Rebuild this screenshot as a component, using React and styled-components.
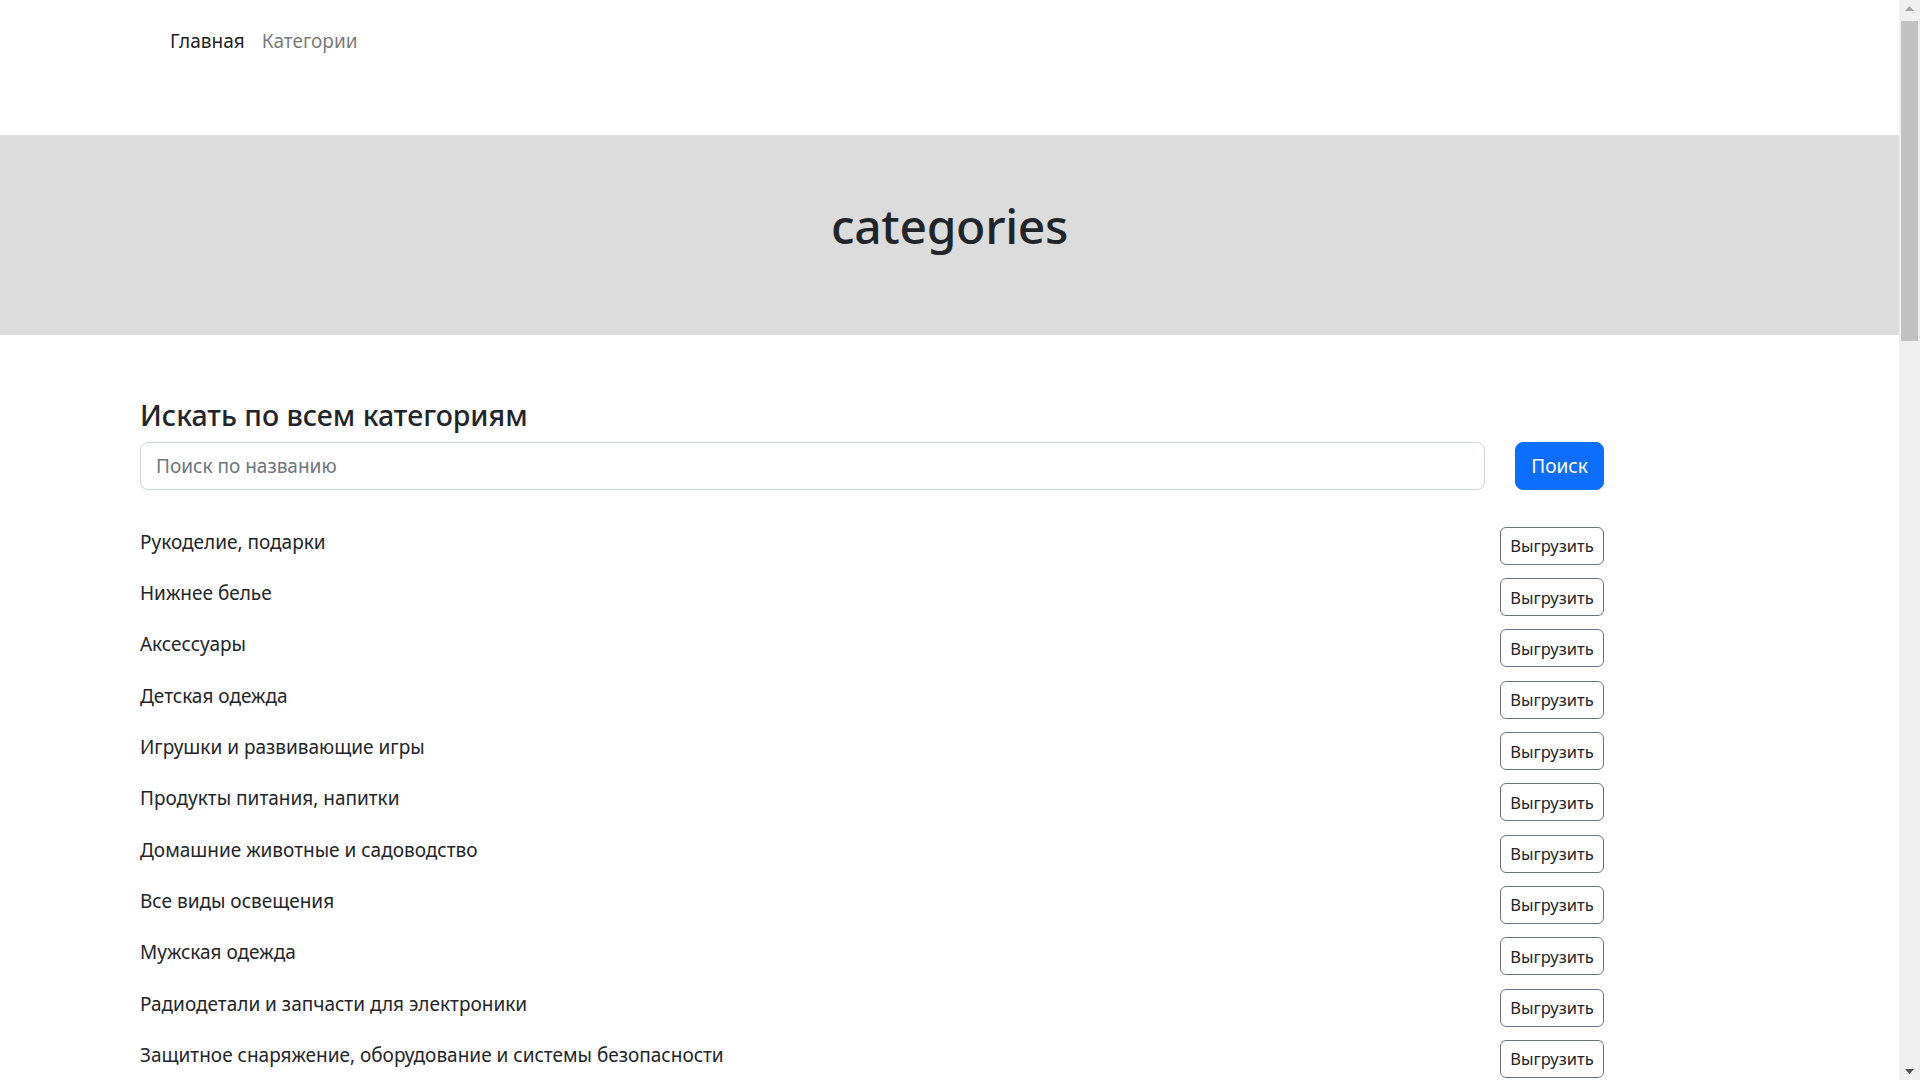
import React, { useState } from 'react';
import styled, { createGlobalStyle } from 'styled-components';

const categories = [
    'Рукоделие, подарки',
    'Нижнее белье',
    'Аксессуары',
    'Детская одежда',
    'Игрушки и развивающие игры',
    'Продукты питания, напитки',
    'Домашние животные и садоводство',
    'Все виды освещения',
    'Мужская одежда',
    'Радиодетали и запчасти для электроники',
    'Защитное снаряжение, оборудование и системы безопасности',
    'Женская одежда',
    'Обувь',
    'Сумки и чемоданы',
    'Ювелирные изделия и часы',
    'Красота и здоровье',
    'Дом и сад',
    'Спорт и развлечения',
    'Автотовары',
    'Бытовая техника',
    'Компьютеры и оргтехника',
    'Телефоны и аксессуары',
    'Бытовая электроника',
    'Инструменты',
    'Строительство и ремонт',
    'Офис и школа',
    'Мебель',
    'Товары для мам и малышей',
    'Свадьбы и торжества',
    'Парики и накладные волосы',
    'Бижутерия',
    'Мотоциклы и аксессуары',
    'Музыкальные инструменты',
    'Канцелярские товары',
    'Кухонные принадлежности',
    'Текстиль для дома',
    'Хранение и организация',
    'Туризм и кемпинг',
    'Рыбалка',
    'Велосипеды и запчасти',
    'Зимние виды спорта',
    'Фитнес и тренажеры',
    'Косметика для лица',
    'Уход за волосами',
    'Маникюр и педикюр',
    'Медицинские товары',
    'Умный дом',
    'Видеонаблюдение',
    'Сетевое оборудование',
    'Комплектующие для ПК',
    'Игровые приставки и аксессуары',
    'Фото- и видеокамеры',
    'Аудиотехника',
    'Носимые устройства',
    'Автоэлектроника',
    'Запчасти для автомобилей',
    'Садовый инвентарь',
    'Семена и растения',
];

const GlobalStyle = createGlobalStyle`
    html, body {
        margin: 0;
        padding: 0;
        background: #fff;
        color: #212529;
        font-family: "Noto Sans", "Open Sans", sans-serif;
    }
`;

const Screen = styled.div`
    display: flex;
    height: 100vh;
    overflow: hidden;
`;

const Page = styled.div`
    flex: 1;
    min-width: 0;
    overflow: hidden;
`;

const ScrollBar = styled.div`
    width: 21px;
    flex-shrink: 0;
    display: flex;
    flex-direction: column;
    background-color: #f0f0f0;
`;

const ScrollArrow = styled.div`
    height: 17px;
    display: flex;
    align-items: center;
    justify-content: center;
    color: ${(props) => props.dark ? '#505050' : '#a3a3a3'};
`;

const ScrollTrack = styled.div`
    flex: 1;
    padding: 4px 2px 0;
`;

const ScrollThumb = styled.div`
    height: 320px;
    background-color: #c1c1c1;
`;

const Navbar = styled.nav`
    box-sizing: border-box;
    height: 135px;
    padding: 26px 0 0 162px;
    display: flex;
    align-items: flex-start;
    gap: 1px;
`;

const NavLink = styled.a`
    font-size: 19px;
    line-height: 30px;
    padding: 0 8px;
    text-decoration: none;
    cursor: pointer;
    color: ${(props) => props.active ? 'rgba(0, 0, 0, 0.9)' : 'rgba(0, 0, 0, 0.55)'};
`;

const Banner = styled.header`
    box-sizing: border-box;
    height: 200px;
    background-color: #dcdcdc;
    padding-top: 62px;
    text-align: center;

    h1 {
        margin: 0;
        font-size: 48px;
        font-weight: 500;
        line-height: 1.2;
        letter-spacing: -0.3px;
        color: #212529;
    }
`;

const Content = styled.main`
    width: 1464px;
    padding: 63px 0 40px 140px;
`;

const Heading = styled.h3`
    margin: 0 0 9.5px;
    font-size: 28.5px;
    font-weight: 500;
    line-height: 1.2;
`;

const SearchRow = styled.form`
    display: flex;
    gap: 30px;
    margin-bottom: 37px;
`;

const SearchInput = styled.input`
    flex: 1;
    box-sizing: border-box;
    height: 48px;
    padding: 8px 15px;
    font-family: inherit;
    font-size: 19px;
    color: #212529;
    border: 1px solid #ced4da;
    border-radius: 8px;
    outline: none;

    &::placeholder {
        color: #6c757d;
    }
`;

const PrimaryButton = styled.button`
    box-sizing: border-box;
    width: 89px;
    height: 48px;
    font-family: inherit;
    font-size: 19px;
    color: #fff;
    background-color: #0d6efd;
    border: 1px solid #0d6efd;
    border-radius: 8px;
    cursor: pointer;
`;

const List = styled.ul`
    list-style: none;
    margin: 0;
    padding: 0;
`;

const Row = styled.li`
    display: flex;
    justify-content: space-between;
    align-items: center;
    height: 38px;
    margin-bottom: 13.33px;

    h5 {
        margin: 0 0 8px;
        font-size: 19px;
        font-weight: 400;
        line-height: 24px;
    }
`;

const OutlineButton = styled.button`
    box-sizing: border-box;
    width: 104px;
    height: 38px;
    padding: 0;
    font-family: inherit;
    font-size: 16.5px;
    color: #212529;
    background: transparent;
    border: 1px solid #6c757d;
    border-radius: 6px;
    cursor: pointer;
`;

const Triangle = ({ down }) => (
    <svg width="9" height="5" viewBox="0 0 9 5">
        <path d={down ? 'M0 0 L9 0 L4.5 5 Z' : 'M0 5 L9 5 L4.5 0 Z'} fill="currentColor" />
    </svg>
);

const App = () => {
    const [query, setQuery] = useState('');

    return (
        <Screen>
            <GlobalStyle />
            <Page>
                <Navbar>
                    <NavLink active>Главная</NavLink>
                    <NavLink>Категории</NavLink>
                </Navbar>
                <Banner>
                    <h1>categories</h1>
                </Banner>
                <Content>
                    <Heading>Искать по всем категориям</Heading>
                    <SearchRow onSubmit={(e) => e.preventDefault()}>
                        <SearchInput
                            placeholder="Поиск по названию"
                            value={query}
                            onChange={(e) => setQuery(e.target.value)}
                        />
                        <PrimaryButton type="submit">Поиск</PrimaryButton>
                    </SearchRow>
                    <List>
                        {categories.map((name) => (
                            <Row key={name}>
                                <h5>{name}</h5>
                                <OutlineButton>Выгрузить</OutlineButton>
                            </Row>
                        ))}
                    </List>
                </Content>
            </Page>
            <ScrollBar>
                <ScrollArrow><Triangle /></ScrollArrow>
                <ScrollTrack>
                    <ScrollThumb />
                </ScrollTrack>
                <ScrollArrow dark><Triangle down /></ScrollArrow>
            </ScrollBar>
        </Screen>
    );
}

export default App;
